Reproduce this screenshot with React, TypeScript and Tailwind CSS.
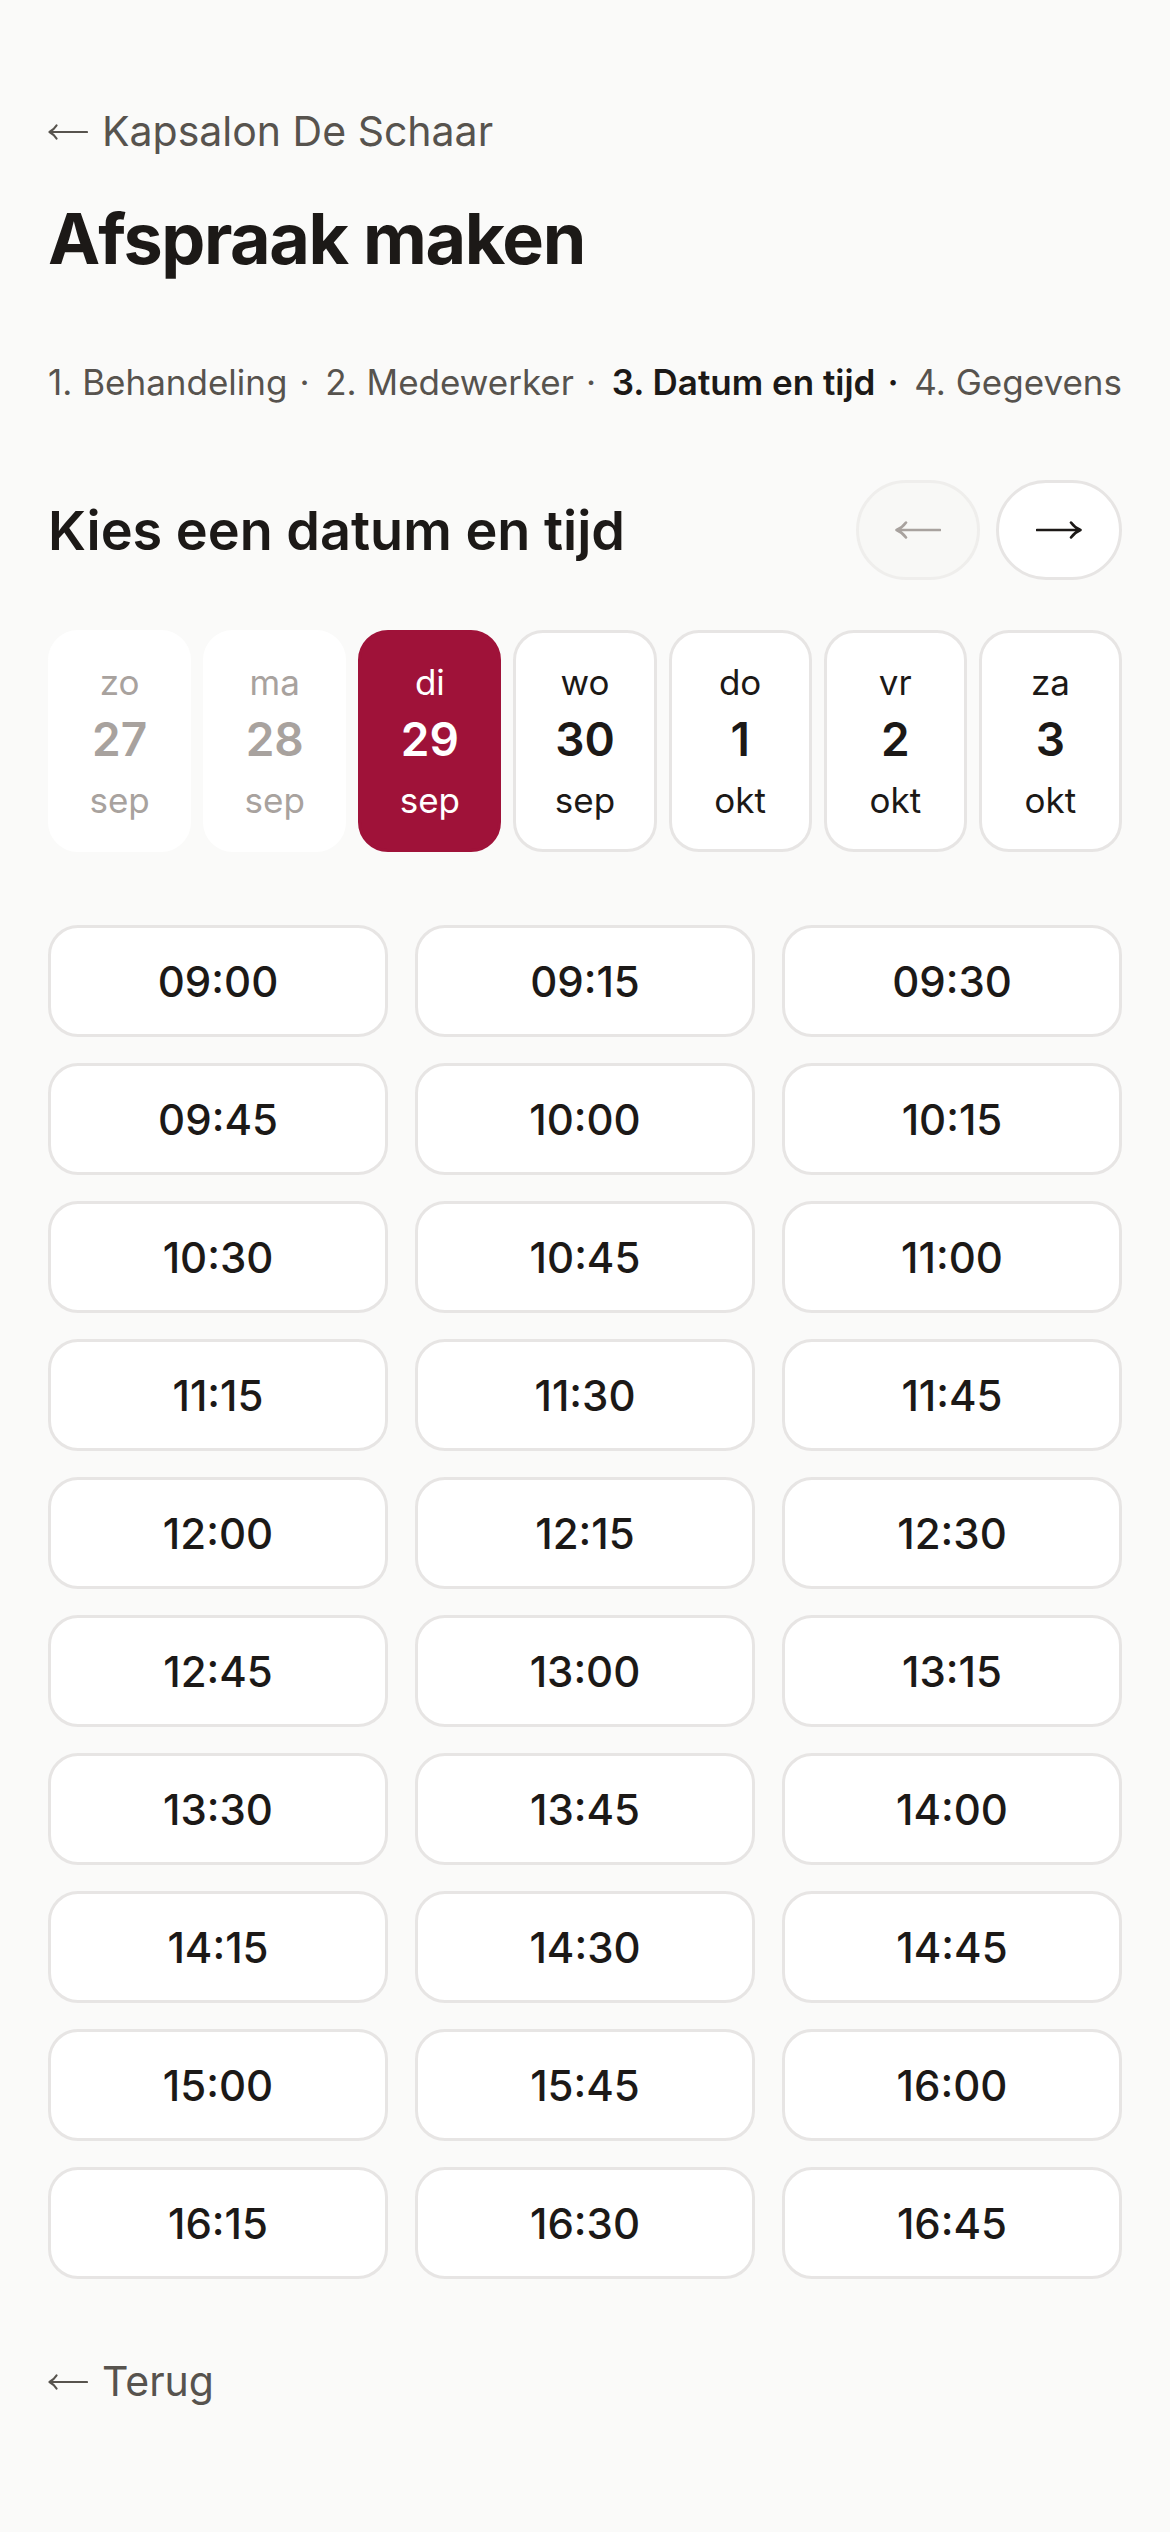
import React from "react"

const DAYS = [
  { wd: "zo", d: "27", m: "sep", state: "off" },
  { wd: "ma", d: "28", m: "sep", state: "off" },
  { wd: "di", d: "29", m: "sep", state: "active" },
  { wd: "wo", d: "30", m: "sep", state: "on" },
  { wd: "do", d: "1", m: "okt", state: "on" },
  { wd: "vr", d: "2", m: "okt", state: "on" },
  { wd: "za", d: "3", m: "okt", state: "on" },
]

const TIMES = [
  "09:00", "09:15", "09:30", "09:45", "10:00", "10:15",
  "10:30", "10:45", "11:00", "11:15", "11:30", "11:45",
  "12:00", "12:15", "12:30", "12:45", "13:00", "13:15",
  "13:30", "13:45", "14:00", "14:15", "14:30", "14:45",
  "15:00", "15:45", "16:00", "16:15", "16:30", "16:45",
]

const STEPS = [
  { label: "1. Behandeling", current: false },
  { label: "2. Medewerker", current: false },
  { label: "3. Datum en tijd", current: true },
  { label: "4. Gegevens", current: false },
]

function Arrow({ dir, className }: { dir: "left" | "right"; className?: string }) {
  return (
    <svg width="46" height="20" viewBox="0 0 46 20" fill="none" className={className}>
      {dir === "right" ? (
        <path d="M1 10H44M35 2.5Q38.5 7.5 44.5 10Q38.5 12.5 35 17.5" stroke="currentColor" strokeWidth="2.6" strokeLinecap="round" strokeLinejoin="round" />
      ) : (
        <path d="M45 10H2M11 2.5Q7.5 7.5 1.5 10Q7.5 12.5 11 17.5" stroke="currentColor" strokeWidth="2.6" strokeLinecap="round" strokeLinejoin="round" />
      )}
    </svg>
  )
}

// thin back arrow used in the text links
function BackArrow() {
  return (
    <svg width="40" height="16" viewBox="0 0 40 16" fill="none">
      <path d="M39 8H2M8.5 1.5Q6 5.5 1.5 8Q6 10.5 8.5 14.5" stroke="currentColor" strokeWidth="2.2" strokeLinecap="round" strokeLinejoin="round" />
    </svg>
  )
}

export default function App() {
  return (
    <div className="min-h-screen bg-[#fafaf9] font-['Inter',sans-serif] text-[#1c1917]">
      <div className="px-[48px] pt-[108px] pb-[120px]">
        <a className="flex h-[48px] items-center gap-[14px] text-[41px] text-[#57534e]">
          <BackArrow />
          <span>Kapsalon De Schaar</span>
        </a>

        <h1 className="mt-[48px] text-[70px] leading-[70px] font-bold tracking-[-0.02em]">
          Afspraak maken
        </h1>

        <ol className="mt-[84px] flex h-[48px] items-center justify-between text-[35px] text-[#57534e]">
          {STEPS.map((s, i) => (
            <li key={s.label} className={s.current ? "font-semibold text-[#1c1917]" : ""}>
              {s.label}
              {i < STEPS.length - 1 && <span className="ml-[12px]">·</span>}
            </li>
          ))}
        </ol>

        <div className="mt-[74px] flex h-[100px] items-center justify-between">
          <h2 className="text-[54px] font-semibold">Kies een datum en tijd</h2>
          <div className="flex gap-[16px]">
            <button className="flex h-[100px] w-[124px] items-center justify-center rounded-full border-[3px] border-[#efeeec] bg-[#f8f8f6] text-[#a8a29e]">
              <Arrow dir="left" />
            </button>
            <button className="flex h-[100px] w-[126px] items-center justify-center rounded-full border-[3px] border-[#e7e5e4] bg-white text-[#1c1917]">
              <Arrow dir="right" />
            </button>
          </div>
        </div>

        <div className="mt-[50px] grid grid-cols-7 gap-[12px]">
          {DAYS.map((d) => {
            const box =
              d.state === "active"
                ? "border-[#9f1239] bg-[#9f1239] text-white"
                : d.state === "off"
                  ? "border-white bg-white text-[#a8a29e]"
                  : "border-[#e7e5e4] bg-white text-[#1c1917]"
            return (
              <div
                key={d.d}
                className={`flex h-[222px] flex-col items-center justify-center rounded-[30px] border-[3px] ${box}`}
              >
                <span className="text-[35px] leading-[44px]">{d.wd}</span>
                <span className="mt-[7px] text-[46px] leading-[56px] font-semibold">{d.d}</span>
                <span className="mt-[11px] text-[35px] leading-[44px]">{d.m}</span>
              </div>
            )
          })}
        </div>

        <div className="mt-[73px] grid grid-cols-3 gap-x-[27px] gap-y-[26px]">
          {TIMES.map((t) => (
            <button
              key={t}
              className="flex h-[112px] items-center justify-center rounded-[30px] border-[3px] border-[#e7e5e4] bg-white text-[42px] font-medium text-[#1c1917]"
            >
              {t}
            </button>
          ))}
        </div>

        <a className="mt-[79px] flex h-[48px] items-center gap-[14px] text-[41px] text-[#57534e]">
          <BackArrow />
          <span>Terug</span>
        </a>
      </div>
    </div>
  )
}
